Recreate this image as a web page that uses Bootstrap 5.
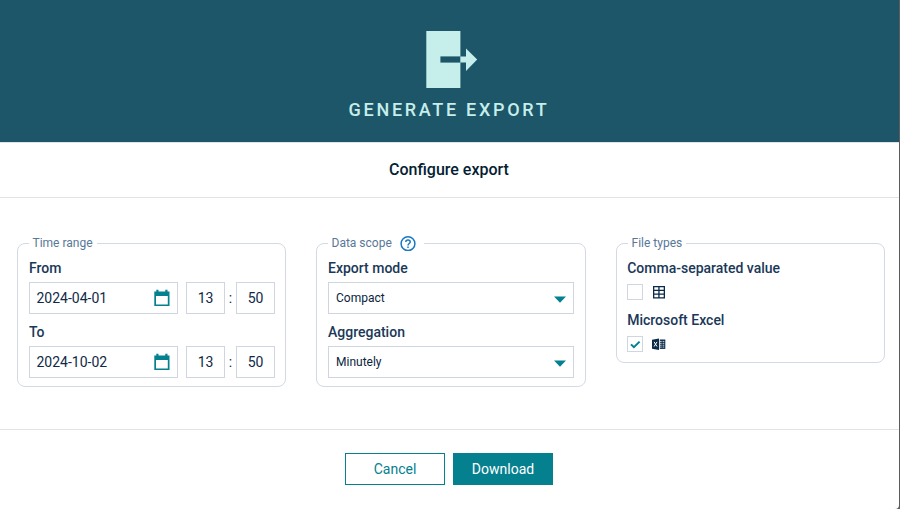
<!DOCTYPE html>
<html lang="en">
<head>
<meta charset="utf-8">
<meta name="viewport" content="width=device-width, initial-scale=1">
<title>Generate export</title>
<link href="https://cdn.jsdelivr.net/npm/bootstrap@5.3.0/dist/css/bootstrap.min.css" rel="stylesheet">
<style>
  body { background: #5c5c5c; font: 400 14px/20px Roboto, sans-serif; color: #0f2a47; height: 509px; overflow: hidden; }
  .dialog { width: 899px; height: 509px; border-bottom-right-radius: 4px; }
  .banner { height: 142px; background: #1e5669; color: #c6eeea; padding-top: 31px; }
  .banner svg { margin-left: 4px; }
  .banner-title { font-size: 18px; font-weight: 500; line-height: 24px; letter-spacing: 2.7px; margin-top: 10px; padding-right: 1px; }
  .subtitle { height: 56px; font-size: 16px; font-weight: 500; border-color: #e0e4e7 !important; color: #041e33; padding-right: 1px; }
  .content { height: 231px; padding: 45px 14px 0 17px; gap: 30px; }
  .group { width: 269px; flex: none; border: 1px solid #d3dae3; border-radius: 8px; padding: 14px 10px 8px 11px; }
  .scope { width: 270px; padding-right: 11px; }
  .group-title { top: -11px; left: 11px; width: auto; padding: 0 4px 0 3.5px; font-size: 12px; line-height: 20px; color: #587898; gap: 8px; }
  .name { font-weight: 500; color: #1a3858; display: block; }
  .field { height: 32px; border: 1px solid #d0d6df; border-radius: 0; color: #0f2a47; background: #fff; font-size: 14px; padding: 0 7px; margin-top: 4px; }
  .field + .name { margin-top: 8px; }
  .times { margin-top: 4px; }
  .times + .name { margin-top: 8px; }
  .times .field { margin-top: 0; }
  .times .date { width: 149px; flex: none; padding: 0 7.5px 0 6.5px; }
  .times .num { width: 39px; flex: none; margin-left: 8px; padding: 0; }
  .times .colon { width: 11px; flex: none; text-align: center; }
  .times .colon + .num { margin-left: 0; }
  .choice { font-size: 12px; color: #0a2540; }
  .choice svg { margin-top: 2px; }
  .files { padding-bottom: 10px; padding-left: 10.2px; }
  .checkline { margin: 6px 0 10px; height: 16px; gap: 9px; }
  .checkline:last-child { margin-bottom: 0; }
  .box { width: 16px; height: 16px; border: 1px solid #d0d6df; }
  .actions { border-color: #e0e4e7 !important; gap: 8px; padding: 23px 1px 0 0; height: 80px; }
  .act { width: 100px; height: 32px; border: 1px solid #05808f; border-radius: 0; padding: 0; font-size: 14px; line-height: 20px; color: #05808f; }
  .act-fill { background: #05808f; color: #fff; }
  svg { display: block; flex: none; }
</style>
<script src="https://cdn.jsdelivr.net/npm/bootstrap@5.3.0/dist/js/bootstrap.bundle.min.js"></script>
</head>
<body>
<main class="dialog bg-white overflow-hidden">
  <header class="banner d-flex flex-column align-items-center">
    <svg width="52" height="57" viewBox="0 0 52 57"><path d="M.3 0H34.4V57H.3z" fill="#c6eeea"/><path d="M14.4 25.4H34.4V31.6H14.4z" fill="#1e5669"/><path d="M34.4 25.4H40V17.5L51.2 28.5 40 40V31.6H34.4z" fill="#c6eeea"/></svg>
    <div class="banner-title text-nowrap">GENERATE EXPORT</div>
  </header>
  <h1 class="subtitle d-flex justify-content-center align-items-center border-top border-bottom m-0">Configure export</h1>
  <form class="content d-flex align-items-start">
    <div class="group position-relative" role="group">
      <div class="group-title position-absolute bg-white">Time range</div>
      <span class="name">From</span>
      <div class="times d-flex align-items-center">
        <div class="field date d-flex align-items-center justify-content-between">2024-04-01
          <svg width="16" height="18" viewBox="0 0 16 18"><path d="M.3 2.6H2.3V.8h2.2v1.8h6.8V.8h2.2v1.8h2V17H.3zM2 7v8.4h11.8V7z" fill="#05808f" fill-rule="evenodd"/></svg></div>
        <div class="field num d-flex align-items-center justify-content-center">13</div><span class="colon">:</span>
        <div class="field num d-flex align-items-center justify-content-center">50</div>
      </div>
      <span class="name">To</span>
      <div class="times d-flex align-items-center">
        <div class="field date d-flex align-items-center justify-content-between">2024-10-02
          <svg width="16" height="18" viewBox="0 0 16 18"><path d="M.3 2.6H2.3V.8h2.2v1.8h6.8V.8h2.2v1.8h2V17H.3zM2 7v8.4h11.8V7z" fill="#05808f" fill-rule="evenodd"/></svg></div>
        <div class="field num d-flex align-items-center justify-content-center">13</div><span class="colon">:</span>
        <div class="field num d-flex align-items-center justify-content-center">50</div>
      </div>
    </div>
    <div class="group scope position-relative" role="group">
      <div class="group-title position-absolute bg-white d-flex align-items-center pe-2">Data scope
        <svg width="16" height="16" viewBox="0 0 16 16" fill="none" stroke="#1778c2" stroke-width="1.5"><circle cx="8" cy="8.7" r="6.9"/><path d="M5.8 7C5.8 5.6 6.8 4.9 8 4.9s2.2.8 2.2 2c0 1.5-2.2 1.7-2.2 3.5"/><path d="M8 11.4v1.6"/></svg></div>
      <span class="name">Export mode</span>
      <div class="field choice d-flex align-items-center justify-content-between">Compact
        <svg width="12" height="7" viewBox="0 0 12 7"><path d="M0 .6H12L6 6.8z" fill="#05808f"/></svg></div>
      <span class="name">Aggregation</span>
      <div class="field choice d-flex align-items-center justify-content-between">Minutely
        <svg width="12" height="7" viewBox="0 0 12 7"><path d="M0 .6H12L6 6.8z" fill="#05808f"/></svg></div>
    </div>
    <div class="group files position-relative" role="group">
      <div class="group-title position-absolute bg-white">File types</div>
      <span class="name">Comma-separated value</span>
      <div class="checkline d-flex align-items-center"><span class="box"></span>
        <svg width="14" height="14" viewBox="0 0 14 14"><path d="M1 1H13V13.5H1zM2.3 2.3v2.4h4V2.3zm5.3 0v2.4h4.1V2.3zM2.3 6v2.5h4V6zm5.3 0v2.5h4.1V6zM2.3 9.8v2.4h4V9.8zm5.3 0v2.4h4.1V9.8z" fill="#0a2a48" fill-rule="evenodd"/></svg></div>
      <span class="name">Microsoft Excel</span>
      <div class="checkline d-flex align-items-center"><span class="box"><svg width="14" height="14" viewBox="0 0 14 14"><path d="M3 7.4L5.9 10.2 11.6 4.6" fill="none" stroke="#05808f" stroke-width="2"/></svg></span>
        <svg width="14" height="14" viewBox="0 0 14 14"><path d="M0 2.8L7 1.5V13L0 11.7z" fill="#0a2a48"/><path d="M2.1 4.9L5 9.5M5 4.9L2.1 9.5" stroke="#fff" stroke-width="1"/><path d="M7.8 2.5H13.3V11.9H7.8z" fill="#0a2a48"/><path d="M7.8 4.4h1.9M10.6 4.4h1.7M7.8 6.3h1.9M10.6 6.3h1.7M7.8 8.2h1.9M10.6 8.2h1.7M7.8 10.1h1.9M10.6 10.1h1.7" stroke="#fff" stroke-width=".8"/></svg></div>
    </div>
  </form>
  <footer class="actions d-flex justify-content-center align-items-start border-top">
    <button type="button" class="btn act">Cancel</button>
    <button type="button" class="btn act act-fill">Download</button>
  </footer>
</main>
</body>
</html>
